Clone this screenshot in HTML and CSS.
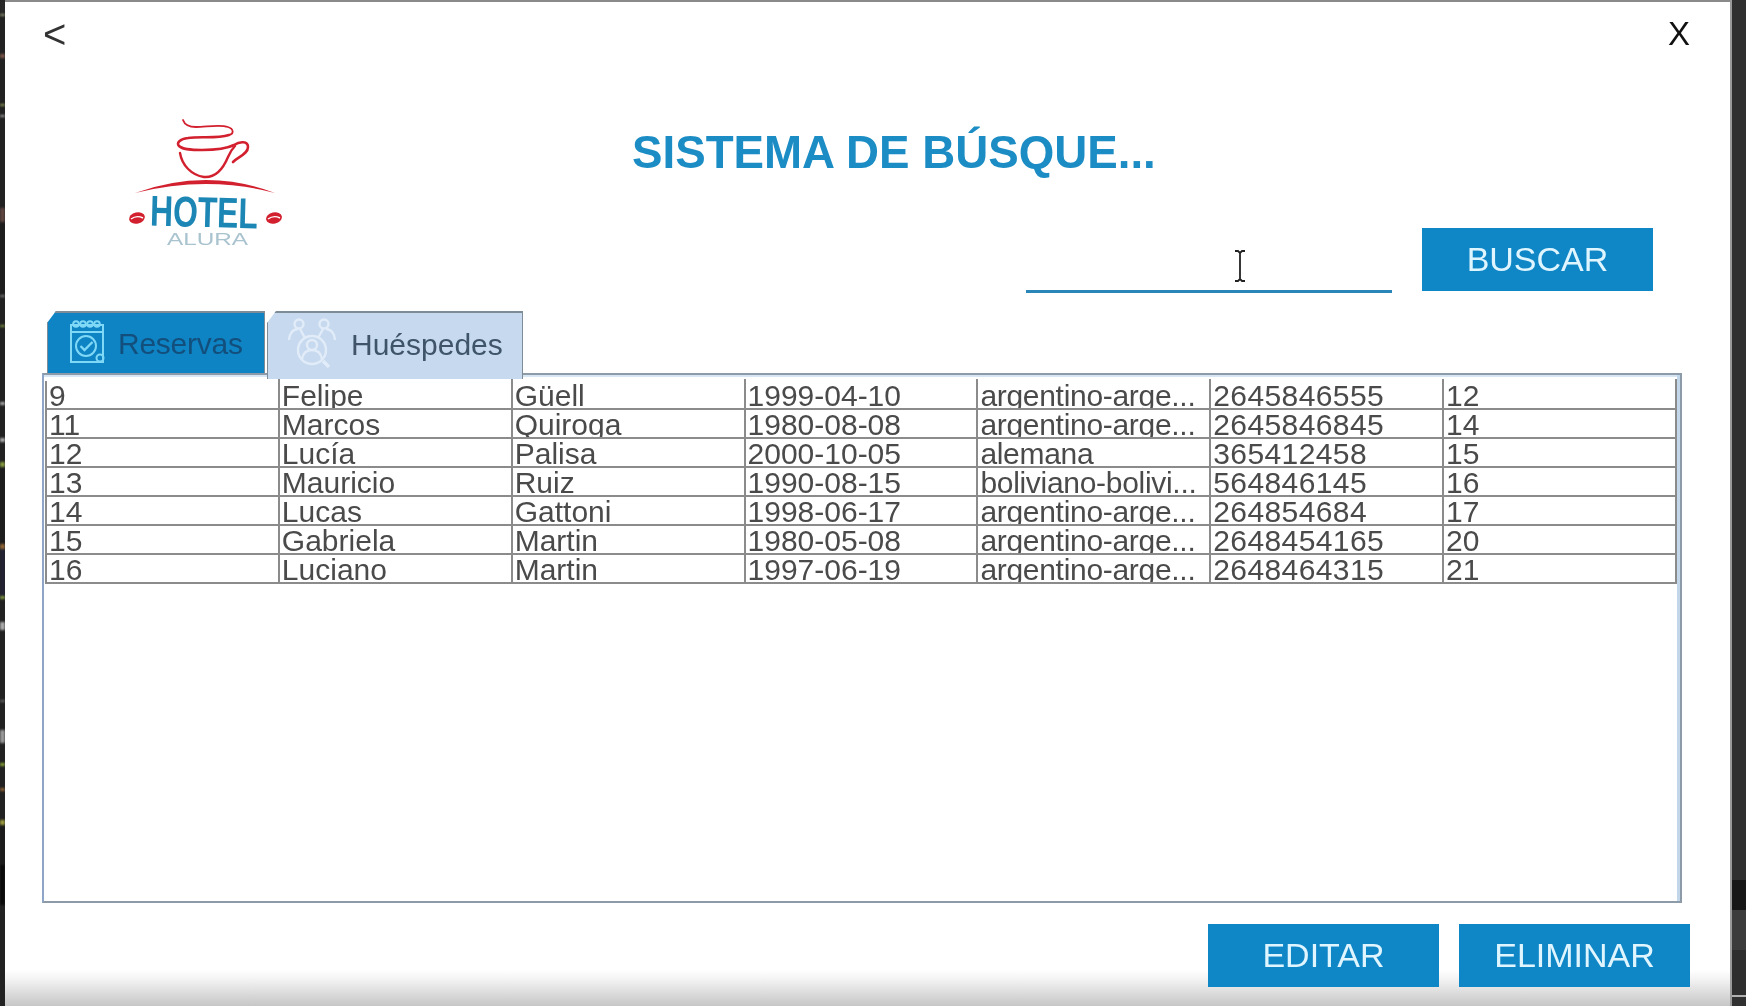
FILE: index.html
```html
<!DOCTYPE html>
<html lang="es">
<head>
<meta charset="utf-8">
<title>Sistema de búsqueda</title>
<link rel="stylesheet" href="styles.css">
</head>
<body>
<div class="screen">
  <div class="strip strip-left"></div>
  <main class="window">
    <div class="topbar">
      <span class="nav-back">&lt;</span>
      <span class="nav-close">X</span>
    </div>
    <div class="heading">
      <svg class="logo" viewBox="0 0 154 128" aria-label="Hotel Alura">
        <g fill="none" stroke="#d3202f" stroke-linecap="round">
          <path stroke-width="1.8" d="M55 1C57 7 62 8 68 8C78 8 92 5 100 8C106 10 106 15 101 16"/>
          <path stroke-width="2.6" d="M101 16C88 20 72 17 60 19C52 20 48 24 51 27C55 31 65 31 74 31C85 31 98 30 106 26C112 22 120 22 120 28C120 35 110 38 105 43"/>
          <path stroke-width="2.4" d="M52 34C54 46 63 56 76 58C88 59 95 50 100 38C102 33 104 30 107 27"/>
        </g>
        <path class="logo-red" d="M7 74Q79 48 147 74Q79 56 7 74z"/>
        <ellipse class="logo-red" cx="9" cy="99" rx="8" ry="5.500" transform="rotate(-12 9 99)"/>
        <ellipse class="logo-red" cx="146" cy="99" rx="8" ry="5.500" transform="rotate(-12 146 99)"/>
        <path class="logo-slash" d="M3 100c4-3 8-3 12-1M140 100c4-3 8-3 12-1"/>
        <text class="logo-hotel" x="22" y="108" textLength="108" lengthAdjust="spacingAndGlyphs" transform="rotate(1.500 76 93)">HOTEL</text>
        <text class="logo-alura" x="39" y="126" textLength="81" lengthAdjust="spacingAndGlyphs">ALURA</text>
      </svg>
      <h1 class="title">SISTEMA DE BÚSQUE...</h1>
    </div>
    <div class="search">
      <div class="search-field">
        <svg class="ibeam" viewBox="0 0 14 32">
          <path d="M2 1h3l2 2 2-2h3M7 3v26M2 31h3l2-2 2 2h3" fill="none" stroke="#222" stroke-width="1.8"/>
        </svg>
      </div>
      <button class="btn">BUSCAR</button>
    </div>
    <div class="tabs">
      <div class="tab tab-off">
        <svg class="tab-icon" viewBox="0 0 38 46" fill="none" stroke="#7fd8f6" stroke-width="2">
          <path d="M3 6h32v37H3z"/>
          <path d="M3 13h32"/>
          <circle cx="8" cy="5" r="2.800"/><circle cx="15" cy="5" r="2.800"/><circle cx="22" cy="5" r="2.800"/><circle cx="29" cy="5" r="2.800"/>
          <circle cx="18" cy="27" r="10"/>
          <path d="M12.500 27l4 4 8-8" stroke-width="2.400"/>
          <circle cx="32" cy="39" r="3.500"/>
        </svg>
        <span class="tab-label tab-label-off">Reservas</span>
      </div>
      <div class="tab tab-on">
        <svg class="tab-icon tab-icon-wide" viewBox="0 0 50 52" fill="none" stroke="#e2ecf9" stroke-width="2.400">
          <circle cx="12" cy="7" r="4.500"/><circle cx="37" cy="7" r="4.500"/>
          <path d="M2 23c0-6 4-11 9-11M48 23c0-6-4-11-9-11"/>
          <path d="M13 12l5 9M36 12l-5 9"/>
          <circle cx="25" cy="33" r="14"/>
          <circle cx="25" cy="28" r="5"/>
          <path d="M15 42c1-6 5-9 10-9s9 3 10 9"/>
          <path d="M36 44l6 6" stroke-width="3.500"/>
        </svg>
        <span class="tab-label">Huéspedes</span>
      </div>
    </div>
    <section class="panel">
      <table class="grid">
        <tbody>
          <tr><td><span>9</span></td><td><span>Felipe</span></td><td><span>Güell</span></td><td><span>1999-04-10</span></td><td><span>argentino-arge...</span></td><td><span>2645846555</span></td><td><span>12</span></td></tr>
          <tr><td><span>11</span></td><td><span>Marcos</span></td><td><span>Quiroga</span></td><td><span>1980-08-08</span></td><td><span>argentino-arge...</span></td><td><span>2645846845</span></td><td><span>14</span></td></tr>
          <tr><td><span>12</span></td><td><span>Lucía</span></td><td><span>Palisa</span></td><td><span>2000-10-05</span></td><td><span>alemana</span></td><td><span>365412458</span></td><td><span>15</span></td></tr>
          <tr><td><span>13</span></td><td><span>Mauricio</span></td><td><span>Ruiz</span></td><td><span>1990-08-15</span></td><td><span>boliviano-bolivi...</span></td><td><span>564846145</span></td><td><span>16</span></td></tr>
          <tr><td><span>14</span></td><td><span>Lucas</span></td><td><span>Gattoni</span></td><td><span>1998-06-17</span></td><td><span>argentino-arge...</span></td><td><span>264854684</span></td><td><span>17</span></td></tr>
          <tr><td><span>15</span></td><td><span>Gabriela</span></td><td><span>Martin</span></td><td><span>1980-05-08</span></td><td><span>argentino-arge...</span></td><td><span>2648454165</span></td><td><span>20</span></td></tr>
          <tr><td><span>16</span></td><td><span>Luciano</span></td><td><span>Martin</span></td><td><span>1997-06-19</span></td><td><span>argentino-arge...</span></td><td><span>2648464315</span></td><td><span>21</span></td></tr>
        </tbody>
      </table>
    </section>
    <div class="actions">
      <button class="btn">EDITAR</button>
      <button class="btn">ELIMINAR</button>
    </div>
  </main>
  <div class="strip strip-right"></div>
</div>
</body>
</html>
```

FILE: styles.css
```css
* { box-sizing: border-box; }
html, body { margin: 0; height: 100%; overflow: hidden; background: #222; }
body { font-family: "Liberation Sans", Arial, sans-serif; }

.screen { display: flex; width: 1746px; height: 1006px; }
.strip { flex: none; }
.strip-left {
  width: 5px;
  filter: blur(0.8px);
  background: linear-gradient(to bottom,
    #2a2a2a 0 14px, #8d9070 14px 16px, #222 16px 54px, #7a5548 54px 58px,
    #222 58px 104px, #8b9455 104px 106px, #222 106px 115px, #999 115px 117px,
    #222 117px 208px, #5e4540 208px 222px, #1d1d1d 222px 295px, #777 295px 297px,
    #222 297px 325px, #7c8f40 325px 327px, #222 327px 402px, #aaa 402px 405px,
    #222 405px 438px, #aaa 438px 442px, #222 442px 462px, #869a40 462px 467px,
    #1d1d1d 467px 544px, #8f6535 544px 549px, #223 549px 596px, #7f9640 596px 599px,
    #222 599px 622px, #aaa 622px 630px, #222 630px 700px, #666 700px 702px,
    #222 702px 730px, #999 730px 743px, #222 743px 763px, #86a035 763px 766px,
    #222 766px 788px, #8a6035 788px 791px, #222 791px 820px, #9c9c40 820px 825px,
    #1b1b1b 825px 865px, #0a0a0a 865px 905px, #222 905px 1006px);
}
.strip-right {
  width: 16px;
  background:
    linear-gradient(to right, #9a9a9a 0 2px, transparent 2px),
    linear-gradient(to bottom,
      #303030 0 880px, #171717 880px 910px, #3c3c3c 910px 950px, #2e2e2e 950px 995px,
      #b0b0b0 995px 997px, #303030 997px 1006px);
}

.window {
  flex: 1;
  display: flex;
  flex-direction: column;
  height: 1006px;
  border-top: 2px solid #8a8a8a;
  background: linear-gradient(to bottom, #fff 0, #fff 968px, #f2f2f2 978px, #c6c6c6 1004px);
  filter: blur(0.6px);
}

.topbar {
  display: flex;
  justify-content: space-between;
  align-items: flex-start;
  padding: 14px 40px 0 38px;
  height: 44px;
  line-height: 36px;
}
.nav-back { font-size: 40px; color: #333; }
.nav-close { font-size: 33px; color: #111; }

.heading {
  display: flex;
  align-items: flex-start;
  padding: 73px 0 0 123px;
  height: 184px;
}
.logo { width: 154px; height: 128px; flex: none; }
.logo-red { fill: #d3202f; }
.logo-slash { fill: none; stroke: #fff; stroke-width: 1.4; }
.logo-hotel { font: 700 43px "Liberation Sans", Arial, sans-serif; fill: #1c86b4; }
.logo-alura { font: 400 17px "Liberation Sans", Arial, sans-serif; fill: #a9c3cf; }
.title {
  margin: 10px 0 0 350px;
  font-size: 45.7px;
  line-height: 48px;
  font-weight: 700;
  color: #1b8cc4;
  white-space: nowrap;
}

.search {
  display: flex;
  justify-content: flex-end;
  align-items: flex-start;
  gap: 30px;
  padding-right: 77px;
  height: 83px;
  margin-top: -2px;
}
.search-field {
  width: 366px;
  height: 65px;
  border-bottom: 3px solid #2a86b8;
  display: flex;
  justify-content: center;
  padding: 22px 0 0 61px;
}
.ibeam { width: 14px; height: 32px; }

.btn {
  width: 231px;
  height: 63px;
  border: 0;
  padding: 0;
  background: #0f86c6;
  color: #dff5ff;
  font: 400 34px "Liberation Sans", Arial, sans-serif;
}

.tabs {
  display: flex;
  gap: 2px;
  padding-left: 42px;
  height: 62px;
  position: relative;
  z-index: 1;
}
.tab {
  display: flex;
  align-items: center;
  font-size: 30px;
  border-top: 2px solid #7e8c98;
  border-left: 1px solid #7e8c98;
  border-right: 1px solid #7e8c98;
  clip-path: polygon(9px 0, 100% 0, 100% 100%, 0 100%, 0 12px);
}
.tab-label { margin-top: 4px; }
.tab-off {
  width: 218px;
  height: 62px;
  padding: 0 0 2px 20px;
  gap: 12px;
  background: #0f84c4;
  color: #134f7c;
}
.tab-label-off { letter-spacing: -0.25px; }
.tab-on {
  width: 256px;
  height: 68px;
  padding: 0 0 6px 19px;
  gap: 14px;
  background: #c6d9ee;
  color: #3f5468;
}
.tab-icon { width: 38px; height: 46px; flex: none; }
.tab-icon-wide { width: 50px; height: 52px; }

.panel {
  width: 1640px;
  height: 530px;
  margin-left: 37px;
  padding: 4px 4px 0 1px;
  background: #fff;
  border: 2px solid #8d9aa8;
  border-left-color: #8ea5c8;
  box-shadow: inset -3px 0 0 #c3d7ea, inset 0 2px 0 #d8e6f4;
}

.grid {
  width: 1632px;
  table-layout: fixed;
  border-collapse: collapse;
  font-size: 30px;
  color: #4a4a4a;
}
.grid td {
  height: 29px;
  padding: 0;
  border: 2px solid #8b8b8b;
  overflow: hidden;
}
.grid tr:first-child td { border-top-color: #fff; }
.grid td span {
  display: block;
  height: 27px;
  line-height: 29px;
  padding-left: 2px;
  margin-top: -1px;
  white-space: nowrap;
  overflow: hidden;
}
.grid td:nth-child(5) span { letter-spacing: -0.3px; }
.grid td:nth-child(6) span { letter-spacing: 0.4px; }

.actions {
  display: flex;
  justify-content: flex-end;
  gap: 20px;
  padding-right: 40px;
  margin-top: 21px;
}
```
